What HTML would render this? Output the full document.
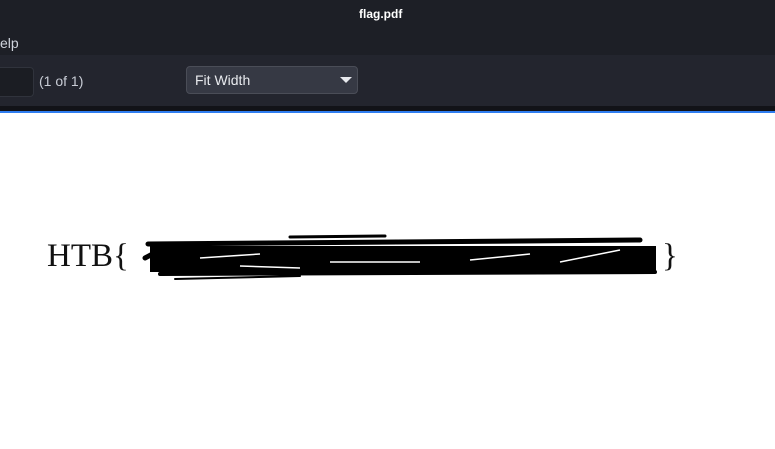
<!DOCTYPE html><html><head><style>
body{margin:0;width:775px;height:449px;overflow:hidden;background:#fff;font-family:"Liberation Sans",sans-serif;position:relative}
.top{position:absolute;left:0;top:0;width:775px;height:55px;background:#1d1f26}
.tb{position:absolute;left:0;top:55px;width:775px;height:51px;background:#23252e}
.dk{position:absolute;left:0;top:106px;width:775px;height:6px;background:#121318}
.bl{position:absolute;left:0;top:111px;width:775px;height:2px;background:#2f7df0}
</style></head><body>
<div class="top"></div>
<div style="position:absolute;left:359px;top:7px;color:#fff;font-size:12px;font-weight:bold">flag.pdf</div>
<div style="position:absolute;left:0;top:35px;color:#cfd3dc;font-size:14px">elp</div>
<div class="tb"></div>
<div style="position:absolute;left:0;top:67px;width:33px;height:28px;background:#1b1d23;border:1px solid #30333c;border-left:none;border-radius:0 4px 4px 0"></div>
<div style="position:absolute;left:39px;top:73px;color:#c8ccd5;font-size:14px">(1 of 1)</div>
<div style="position:absolute;left:186px;top:66px;width:172px;height:28px;background:#363944;border:1px solid #4a4d57;border-radius:4px;box-sizing:border-box"></div>
<div style="position:absolute;left:195px;top:72px;color:#e8eaee;font-size:14px">Fit Width</div>
<div style="position:absolute;left:340px;top:77px;width:0;height:0;border-left:6px solid transparent;border-right:6px solid transparent;border-top:6px solid #e8eaee"></div>
<div class="dk"></div><div class="bl"></div>
<div style="position:absolute;left:47px;top:238px;font-family:'Liberation Serif',serif;font-size:33px;color:#111">HTB{</div>
<div style="position:absolute;left:662px;top:238px;font-family:'Liberation Serif',serif;font-size:33px;color:#111">}</div>
<svg style="position:absolute;left:0;top:0" width="775" height="449">
<rect x="150" y="246" width="506" height="26" fill="#000"/>
<g stroke="#000" stroke-linecap="round" fill="none">
<path d="M290 237 L385 236" stroke-width="3"/>
<path d="M148 244 L640 240" stroke-width="5"/>
<path d="M160 274 L655 272" stroke-width="4"/>
<path d="M175 279 L300 276" stroke-width="2"/>
<path d="M145 258 L160 250" stroke-width="5"/>
</g>
<g stroke="#fff" stroke-width="1.5" fill="none">
<path d="M200 258 L260 254"/><path d="M330 262 L420 262"/><path d="M470 260 L530 254"/><path d="M560 262 L620 250"/><path d="M240 266 L300 268"/>
</g>
</svg>
</body></html>
